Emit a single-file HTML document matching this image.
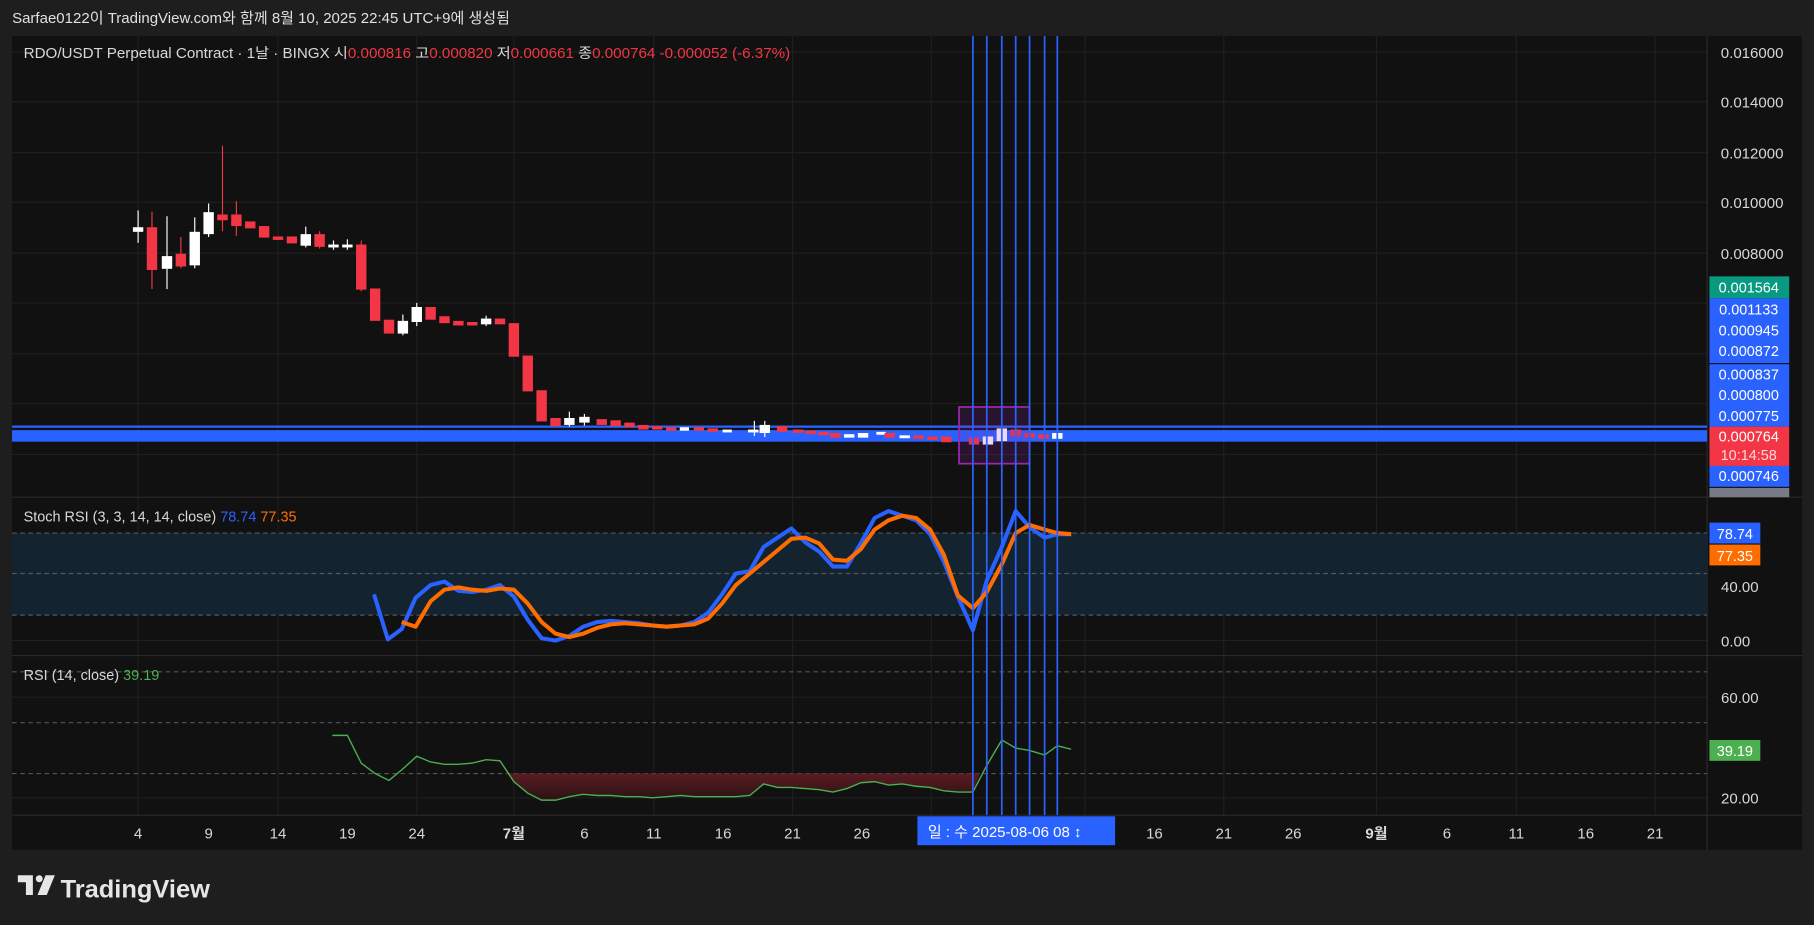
<!DOCTYPE html>
<html><head><meta charset="utf-8"><style>
html,body{margin:0;padding:0;background:#1e1e1e;width:1814px;height:925px;overflow:hidden}
svg{display:block}
text{font-family:"Liberation Sans Narrow","Liberation Sans","Noto Sans CJK KR",sans-serif}
</style></head><body>
<svg width="1814" height="925" viewBox="0 0 1568 800" xmlns="http://www.w3.org/2000/svg">
<rect width="1568" height="800" fill="#1e1e1e"/>
<text x="10" y="20" fill="#e0e0e0" font-size="13">Sarfae0122이 TradingView.com와 함께 8월 10, 2025 22:45 UTC+9에 생성됨</text>
<rect x="10" y="31" width="1548" height="704" fill="#111111"/>
<g stroke="#1f1f1f" stroke-width="1">
<line x1="10" y1="45" x2="1476" y2="45"/><line x1="10" y1="88" x2="1476" y2="88"/><line x1="10" y1="132" x2="1476" y2="132"/><line x1="10" y1="175" x2="1476" y2="175"/><line x1="10" y1="219" x2="1476" y2="219"/><line x1="10" y1="262" x2="1476" y2="262"/><line x1="10" y1="306" x2="1476" y2="306"/><line x1="10" y1="349" x2="1476" y2="349"/><line x1="10" y1="393" x2="1476" y2="393"/>
<line x1="10" y1="507" x2="1476" y2="507"/><line x1="10" y1="554" x2="1476" y2="554"/><line x1="10" y1="603" x2="1476" y2="603"/><line x1="10" y1="690" x2="1476" y2="690"/>
<line x1="119" y1="31" x2="119" y2="705"/><line x1="240" y1="31" x2="240" y2="705"/><line x1="360" y1="31" x2="360" y2="705"/><line x1="444" y1="31" x2="444" y2="705"/><line x1="565" y1="31" x2="565" y2="705"/><line x1="685" y1="31" x2="685" y2="705"/><line x1="805" y1="31" x2="805" y2="705"/><line x1="938" y1="31" x2="938" y2="705"/><line x1="1058" y1="31" x2="1058" y2="705"/><line x1="1190" y1="31" x2="1190" y2="705"/><line x1="1311" y1="31" x2="1311" y2="705"/><line x1="1431" y1="31" x2="1431" y2="705"/>
</g>
<line x1="10" y1="430" x2="1558" y2="430" stroke="#2a2a2a"/>
<line x1="10" y1="567" x2="1558" y2="567" stroke="#2a2a2a"/>
<line x1="10" y1="705" x2="1558" y2="705" stroke="#2a2a2a"/>
<line x1="1476" y1="31" x2="1476" y2="735" stroke="#2a2a2a"/>
<text x="20" y="50" fill="#d8d8d8" font-size="12.5" textLength="663" lengthAdjust="spacingAndGlyphs">RDO/USDT Perpetual Contract · 1날 · BINGX  시<tspan fill="#f23645">0.000816</tspan>  고<tspan fill="#f23645">0.000820</tspan>  저<tspan fill="#f23645">0.000661</tspan>  종<tspan fill="#f23645">0.000764  -0.000052 (-6.37%)</tspan></text>
<g fill="#d8d8d8" font-size="13" text-anchor="end">
<text x="1542" y="50">0.016000</text><text x="1542" y="93">0.014000</text><text x="1542" y="137">0.012000</text><text x="1542" y="180">0.010000</text><text x="1542" y="224">0.008000</text>
</g>
<rect x="10" y="368" width="1466" height="2" fill="#2962ff"/>
<rect x="10" y="372" width="1466" height="10" fill="#2962ff"/>
<g>
<g fill="#ffffff" stroke="#ffffff">
<line x1="119" y1="182" x2="119" y2="210"/><rect x="115" y="197" width="8" height="3"/>
<line x1="144" y1="187" x2="144" y2="250"/><rect x="140" y="222" width="8" height="10"/>
<line x1="168" y1="188" x2="168" y2="232"/><rect x="164" y="201" width="8" height="28"/>
<line x1="180" y1="176" x2="180" y2="205"/><rect x="176" y="184" width="8" height="18"/>
<line x1="264" y1="196" x2="264" y2="214"/><rect x="260" y="203" width="8" height="9"/>
<line x1="288" y1="208" x2="288" y2="216"/><rect x="284" y="212" width="8" height="1.5"/>
<line x1="300" y1="207" x2="300" y2="216"/><rect x="296" y="212" width="8" height="1.5"/>
<line x1="348" y1="272" x2="348" y2="290"/><rect x="344" y="278" width="8" height="10"/>
<line x1="360" y1="262" x2="360" y2="282"/><rect x="356" y="266" width="8" height="12"/>
<line x1="420" y1="273" x2="420" y2="282"/><rect x="416" y="276" width="8" height="4"/>
<line x1="492" y1="356" x2="492" y2="369"/><rect x="488" y="362" width="8" height="5"/>
<line x1="505" y1="358" x2="505" y2="368"/><rect x="501" y="361" width="8" height="4"/>
<rect x="588" y="370" width="7" height="2"/><rect x="625" y="372" width="7" height="1.5"/>
<line x1="652" y1="364" x2="652" y2="377"/><rect x="647" y="372" width="8" height="1.5"/>
<line x1="661" y1="364" x2="661" y2="378"/><rect x="657" y="368" width="8" height="6"/>
<rect x="730" y="376" width="8" height="2"/><rect x="742" y="375" width="8" height="3"/><rect x="758" y="374" width="7" height="1.5"/><rect x="778" y="377" width="8" height="1.5"/>
<line x1="866" y1="358" x2="866" y2="384"/><rect x="862" y="371" width="8" height="10"/>
<rect x="850" y="378" width="8" height="6"/><rect x="910" y="375" width="8" height="4"/>
</g>
<g fill="#f23645" stroke="#f23645">
<line x1="131" y1="183" x2="131" y2="250"/><rect x="127" y="197" width="8" height="36"/>
<line x1="156" y1="205" x2="156" y2="232"/><rect x="152" y="220" width="8" height="10"/>
<line x1="192" y1="126" x2="192" y2="200"/><rect x="188" y="186" width="8" height="4"/>
<line x1="204" y1="174" x2="204" y2="204"/><rect x="200" y="186" width="8" height="9"/>
<rect x="212" y="192" width="8" height="5"/><rect x="224" y="196" width="8" height="9"/>
<rect x="236" y="205" width="8" height="2"/><rect x="248" y="205" width="8" height="5"/>
<line x1="276" y1="200" x2="276" y2="215"/><rect x="272" y="203" width="8" height="10"/>
<line x1="312" y1="208" x2="312" y2="252"/><rect x="308" y="212" width="8" height="38"/>
<rect x="320" y="250" width="8" height="27"/><rect x="332" y="277" width="8" height="11"/>
<rect x="368" y="266" width="8" height="10"/><rect x="380" y="274" width="8" height="5"/>
<rect x="392" y="278" width="8" height="3"/><rect x="404" y="279" width="8" height="2"/>
<rect x="428" y="276" width="8" height="4"/><rect x="440" y="280" width="8" height="28"/>
<rect x="452" y="308" width="8" height="30"/><rect x="464" y="338" width="8" height="26"/>
<rect x="476" y="362" width="8" height="6"/><rect x="516" y="363" width="8" height="4"/>
<rect x="528" y="364" width="8" height="4"/><rect x="540" y="366" width="8" height="3"/>
<rect x="552" y="368" width="8" height="3"/><rect x="564" y="369" width="8" height="2"/><rect x="576" y="370" width="8" height="2"/>
<rect x="600" y="370" width="8" height="2"/><rect x="612" y="371" width="8" height="2"/>
<rect x="672" y="369" width="8" height="4"/><rect x="686" y="372" width="8" height="2"/><rect x="697" y="373" width="8" height="2"/><rect x="708" y="374" width="8" height="2"/><rect x="718" y="375" width="8" height="3"/>
<rect x="765" y="375" width="8" height="3"/><rect x="790" y="377" width="8" height="2"/><rect x="802" y="378" width="8" height="2"/>
<rect x="814" y="378" width="8" height="4"/>
<rect x="838" y="379" width="8" height="5"/><rect x="874" y="372" width="8" height="5"/>
<rect x="886" y="375" width="8" height="3"/><rect x="898" y="376" width="8" height="3"/>
</g>
</g>
<rect x="829" y="352" width="61" height="49" fill="rgba(156,39,176,0.18)" stroke="#9c27b0" stroke-width="1.5"/>
<g font-size="12.5" text-anchor="middle">
<rect x="1478" y="239" width="69" height="19" fill="#089981"/><text x="1512" y="253" fill="#fff">0.001564</text>
<rect x="1478" y="258" width="69" height="56" fill="#2962ff"/>
<text x="1512" y="272" fill="#fff">0.001133</text><text x="1512" y="290" fill="#fff">0.000945</text><text x="1512" y="308" fill="#fff">0.000872</text>
<rect x="1478" y="315" width="69" height="54" fill="#2962ff"/>
<text x="1512" y="328" fill="#fff">0.000837</text><text x="1512" y="346" fill="#fff">0.000800</text><text x="1512" y="364" fill="#fff">0.000775</text>
<rect x="1478" y="369" width="69" height="34" fill="#f23645"/>
<text x="1512" y="382" fill="#fff">0.000764</text><text x="1512" y="398" fill="#ffd6da">10:14:58</text>
<rect x="1478" y="403" width="69" height="18" fill="#2962ff"/><text x="1512" y="416" fill="#fff">0.000746</text>
<rect x="1478" y="422" width="69" height="8" fill="#787b86"/>
</g>
<rect x="10" y="461" width="1466" height="71" fill="#132330"/>
<g stroke="#555" stroke-dasharray="4,3"><line x1="10" y1="461" x2="1476" y2="461"/><line x1="10" y1="496" x2="1476" y2="496"/><line x1="10" y1="532" x2="1476" y2="532"/></g>
<text x="20" y="451" fill="#d8d8d8" font-size="12.5">Stoch RSI (3, 3, 14, 14, close) <tspan fill="#2962ff">78.74</tspan> <tspan fill="#ff6d00">77.35</tspan></text>
<polyline fill="none" stroke="#2962ff" stroke-width="3.5" stroke-linejoin="round" points="323,514 335,553 347,544 359,517 372,506 384,503 396,511 408,512 420,510 432,506 444,516 456,536 468,552 480,554 492,550 504,542 516,538 528,537 540,538 552,539 564,541 576,542 588,541 600,538 612,530 624,514 636,496 648,494 660,473 672,465 684,457 696,469 708,477 720,490 732,490 744,470 756,448 768,442 780,446 792,450 804,462 816,486 828,516 841,545 853,502 866,473 878,442 890,456 903,465 914,462 926,462"/>
<polyline fill="none" stroke="#ff6d00" stroke-width="3.5" stroke-linejoin="round" points="347,538 359,542 372,520 384,510 396,508 408,510 420,511 432,509 444,510 456,522 468,538 480,548 492,551 504,548 516,543 528,540 540,539 552,540 564,541 576,542 588,541 600,540 612,535 624,522 636,506 648,496 660,486 672,476 684,466 696,465 708,470 720,484 732,485 744,475 756,458 768,450 780,446 792,448 804,458 816,480 828,515 841,526 853,512 866,488 878,461 890,454 903,458 914,461 926,462"/>
<g font-size="12.5" text-anchor="middle">
<rect x="1478" y="452" width="44" height="18" fill="#2962ff"/><text x="1500" y="466" fill="#fff">78.74</text>
<rect x="1478" y="471" width="44" height="18" fill="#ff6d00"/><text x="1500" y="485" fill="#fff">77.35</text>
</g>
<g fill="#d8d8d8" font-size="13"><text x="1488" y="512">40.00</text><text x="1488" y="559">0.00</text><text x="1488" y="608">60.00</text><text x="1488" y="695">20.00</text></g>
<g stroke="#555" stroke-dasharray="4,3"><line x1="10" y1="581" x2="1476" y2="581"/><line x1="10" y1="625" x2="1476" y2="625"/><line x1="10" y1="669" x2="1476" y2="669"/></g>
<text x="20" y="588" fill="#d8d8d8" font-size="12.5">RSI (14, close) <tspan fill="#4caf50">39.19</tspan></text>
<defs><linearGradient id="rg" x1="0" y1="0" x2="0" y2="1"><stop offset="0" stop-color="#5a1c22"/><stop offset="1" stop-color="#2a1214"/></linearGradient></defs>
<path d="M438,669 L444,676 456,686 468,692 480,692 492,689 504,687 516,688 528,688 540,689 552,689 564,690 576,689 588,688 600,689 612,689 624,689 636,689 648,688 660,678 672,681 684,681 696,682 708,683 720,685 732,682 744,677 756,676 768,679 780,678 792,680 804,681 816,684 828,685 841,685 847,669 Z" fill="url(#rg)"/>
<polyline fill="none" stroke="#4caf50" stroke-width="1.2" points="287,636 300,636 312,660 324,669 336,675 348,665 360,654 372,659 384,661 396,661 408,660 420,657 432,658 444,676 456,686 468,692 480,692 492,689 504,687 516,688 528,688 540,689 552,689 564,690 576,689 588,688 600,689 612,689 624,689 636,689 648,688 660,678 672,681 684,681 696,682 708,683 720,685 732,682 744,677 756,676 768,679 780,678 792,680 804,681 816,684 828,685 841,685 853,662 866,640 878,647 890,649 903,653 914,645 926,648"/>
<rect x="1478" y="640" width="44" height="18" fill="#4caf50"/><text x="1500" y="654" fill="#fff" font-size="12.5" text-anchor="middle">39.19</text>
<g stroke="#2962ff" stroke-width="1.5"><line x1="841" y1="31" x2="841" y2="705"/><line x1="853" y1="31" x2="853" y2="705"/><line x1="866" y1="31" x2="866" y2="705"/><line x1="878" y1="31" x2="878" y2="705"/><line x1="890" y1="31" x2="890" y2="705"/><line x1="903" y1="31" x2="903" y2="705"/><line x1="914" y1="31" x2="914" y2="705"/></g>
<g fill="#d8d8d8" font-size="13" text-anchor="middle">
<text x="119" y="725">4</text><text x="180" y="725">9</text><text x="240" y="725">14</text><text x="300" y="725">19</text><text x="360" y="725">24</text><text x="444" y="725" font-weight="bold">7월</text><text x="505" y="725">6</text><text x="565" y="725">11</text><text x="625" y="725">16</text><text x="685" y="725">21</text><text x="745" y="725">26</text><text x="998" y="725">16</text><text x="1058" y="725">21</text><text x="1118" y="725">26</text><text x="1190" y="725" font-weight="bold">9월</text><text x="1251" y="725">6</text><text x="1311" y="725">11</text><text x="1371" y="725">16</text><text x="1431" y="725">21</text>
</g>
<rect x="793" y="706" width="171" height="25" fill="#2962ff"/>
<text x="802" y="724" fill="#fff" font-size="13">일  :  수 2025-08-06   08   ↕</text>
<g fill="#e6e6e6">
<path d="M15,757 h13 v17 h-6 v-11 h-7 z"/>
<circle cx="33.5" cy="760" r="3"/>
<path d="M39,757 h8 l-7,17 h-8 z"/>
<text x="52" y="776" font-family="Liberation Sans,sans-serif" font-size="22" font-weight="bold">TradingView</text>
</g>
</svg>
</body></html>
